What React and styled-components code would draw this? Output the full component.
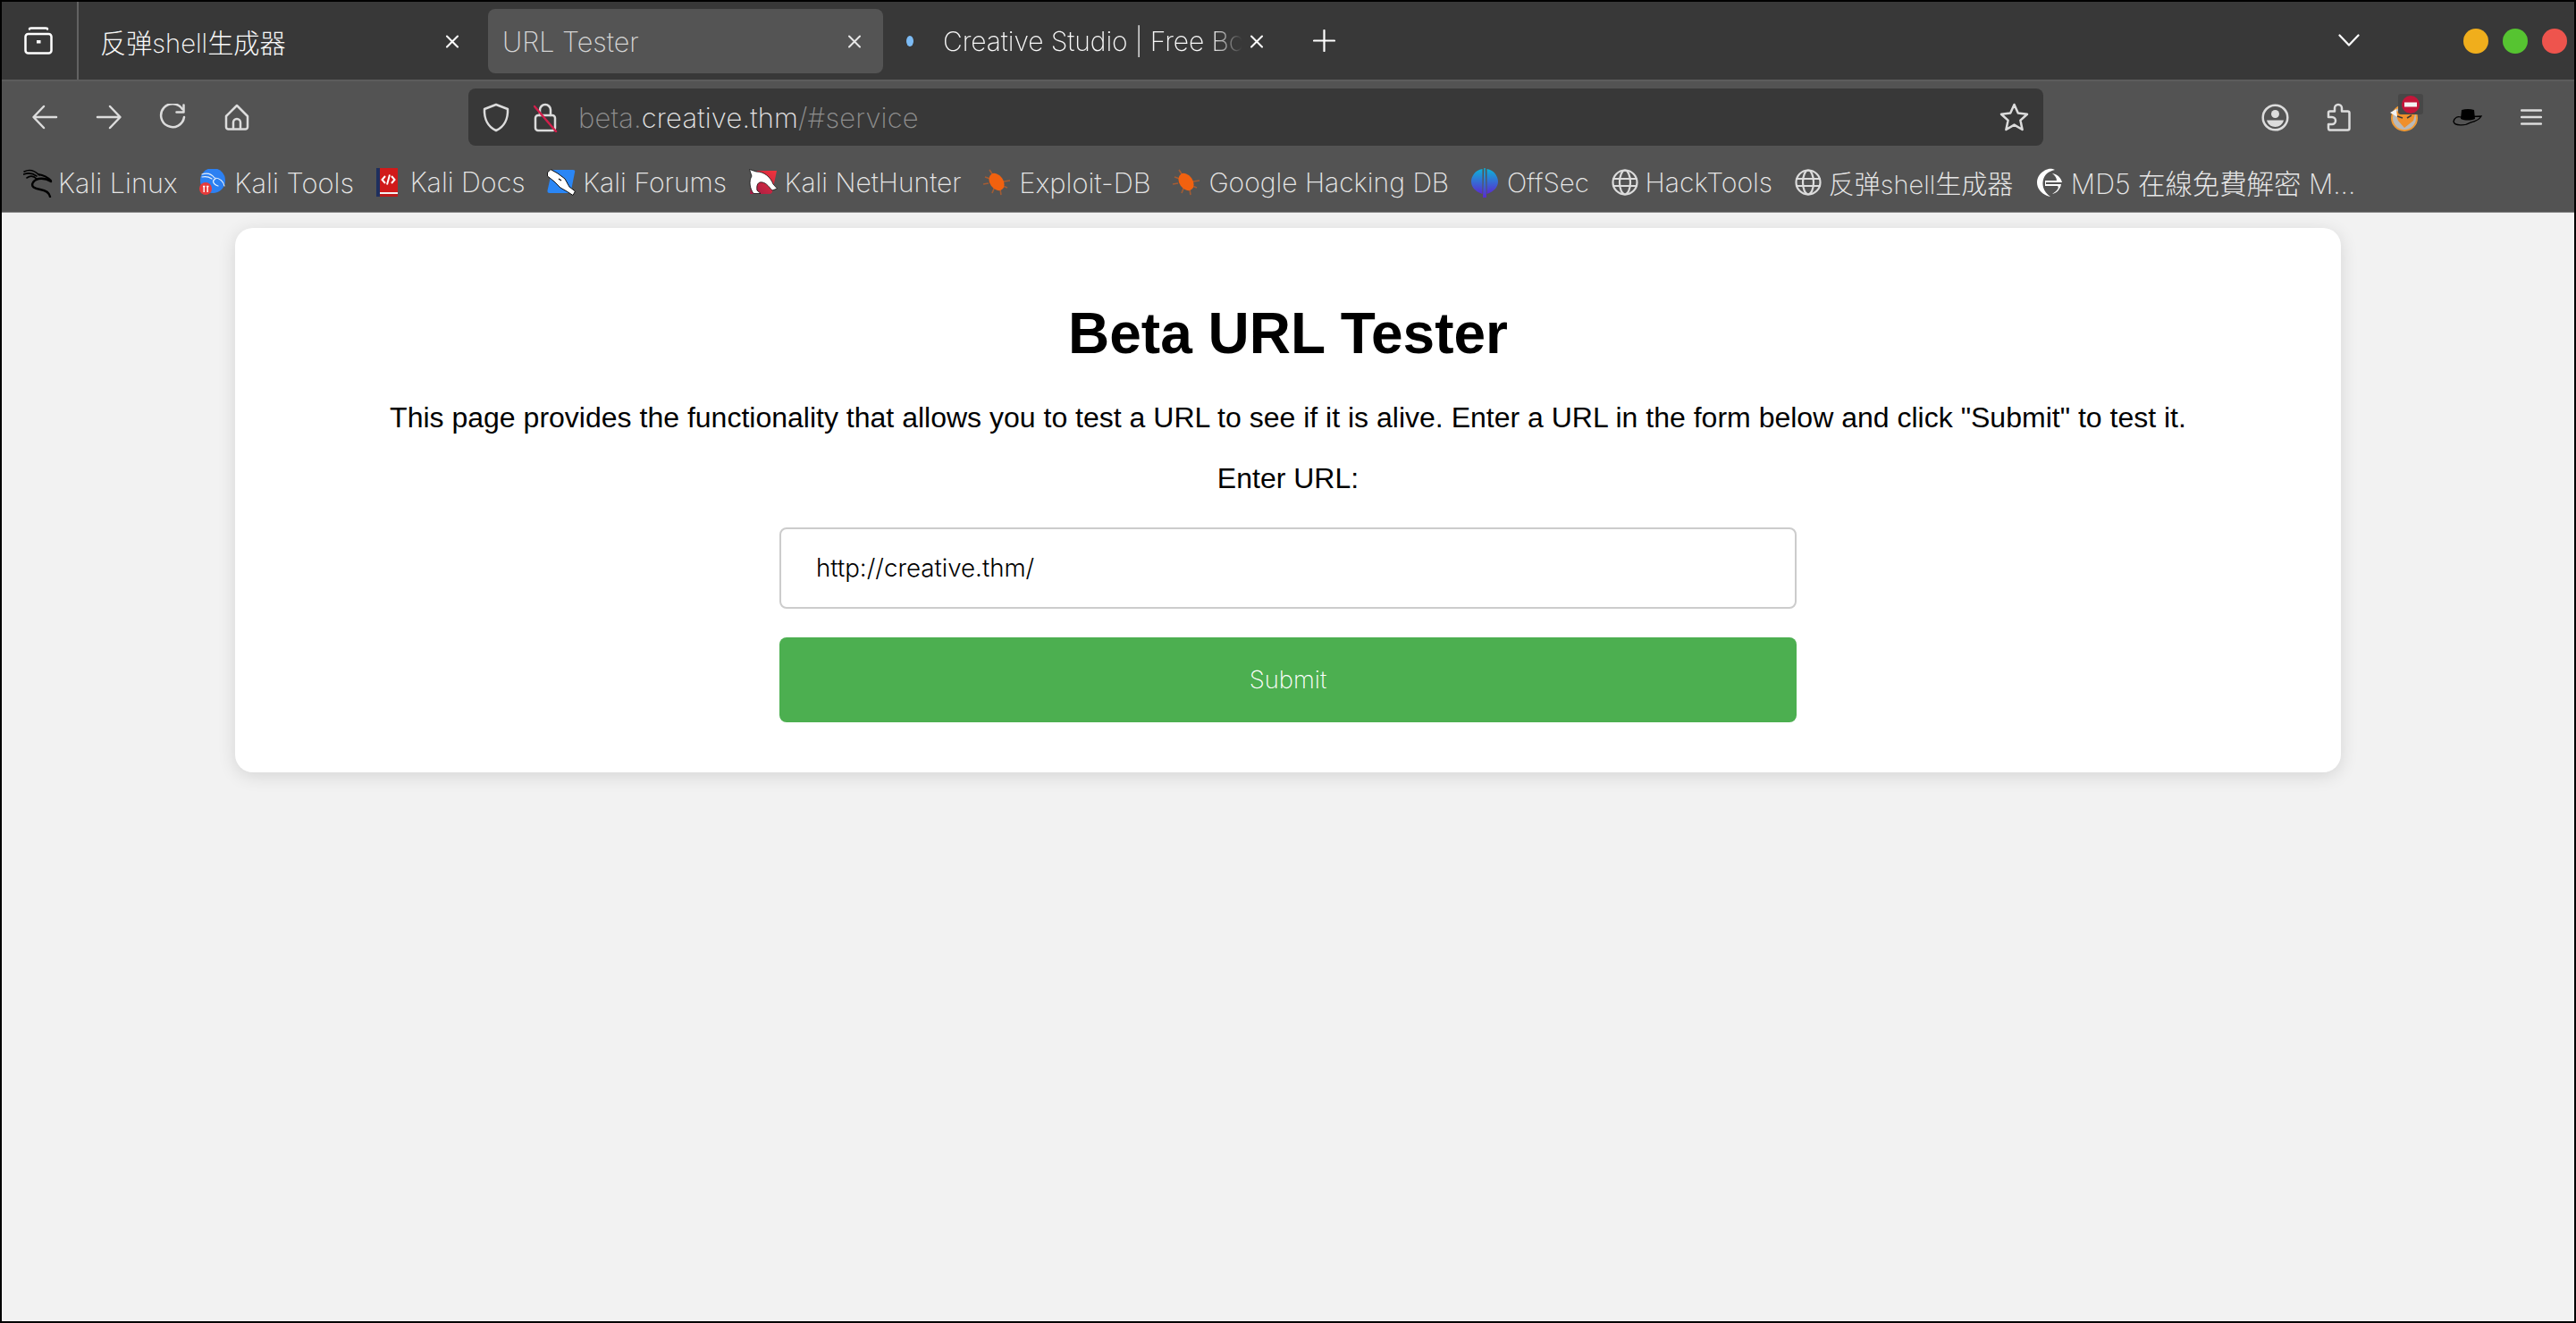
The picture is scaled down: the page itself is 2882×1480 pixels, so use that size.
import React from "react";
import styled, { createGlobalStyle } from "styled-components";

const Global = createGlobalStyle`
  html, body { margin: 0; padding: 0; height: 100%; }
  #root { height: 100%; }
  * { box-sizing: border-box; }
`;

const UI_FONT = `Inter, "Noto Sans CJK SC", "Noto Sans", sans-serif`;
const PAGE_FONT = `"Liberation Sans", Arial, sans-serif`;

const Frame = styled.div`
  height: 100vh;
  border: 2px solid #000;
  display: flex;
  flex-direction: column;
  background: #f2f2f2;
  overflow: hidden;
`;

/* ---------- tab strip ---------- */
const TabStrip = styled.div`
  height: 89px;
  flex: none;
  display: flex;
  align-items: stretch;
  background: #383838;
  border-bottom: 2px solid #5c5c5c;
  font-family: ${UI_FONT};
  font-weight: 200;
`;
const SidebarSlot = styled.div`
  width: 86px;
  flex: none;
  display: flex;
  align-items: center;
  padding-left: 25px;
  border-right: 2px solid #626262;
`;
const TabList = styled.div`
  display: flex;
  gap: 8px;
  padding: 8px 0 6px 8px;
`;
const Tab = styled.div`
  width: 442px;
  height: 72px;
  border-radius: 8px;
  display: flex;
  align-items: center;
  padding: 0 24px 0 16px;
  background: ${(p) => (p.$active ? "#545454" : "transparent")};
  color: ${(p) => (p.$active ? "#d4d4d4" : "#f8f8f8")};
  font-size: 30.5px;
  white-space: nowrap;
`;
const TabDot = styled.span`
  width: 8px;
  height: 12px;
  border-radius: 50%;
  background: #7dbcf5;
  flex: none;
  margin: 0 33px 0 2px;
`;
const TabLabel = styled.span`
  flex: 1;
  font-size: ${(p) => p.$size || 30.5}px;
`;
const FadedTabLabel = styled.span`
  flex: none;
  font-size: 30px;
  width: 345px;
  margin-right: -2px;
  letter-spacing: -0.1px;
  -webkit-mask-image: linear-gradient(90deg, #000 87%, transparent 97%);
  mask-image: linear-gradient(90deg, #000 87%, transparent 97%);
`;
const NewTab = styled.div`
  width: 25px;
  margin-left: 31px;
  display: flex;
  align-items: center;
`;
const StripEnd = styled.div`
  margin-left: auto;
  display: flex;
  align-items: center;
  padding-right: 8px;
`;
const Chevron = styled.div`
  display: flex;
  margin-right: 116px;
  margin-top: -1px;
`;
const WinDots = styled.div`
  display: flex;
  gap: 16px;
`;
const WinDot = styled.span`
  width: 28px;
  height: 28px;
  border-radius: 50%;
  background: ${(p) => p.$c};
`;

/* ---------- toolbar ---------- */
const NavArea = styled.div`
  flex: none;
  height: 147px;
  background: #535353;
  border-bottom: 1px solid #8a8a8a;
  font-family: ${UI_FONT};
  font-weight: 200;
`;
const NavRow = styled.div`
  height: 64px;
  margin-top: 8px;
  display: flex;
  align-items: center;
  padding: 0 12px;
`;
const NavGroup = styled.div`
  display: flex;
  flex: none;
`;
const NavSlot = styled.div`
  width: 71.75px;
  height: 64px;
  display: flex;
  align-items: center;
  justify-content: center;
  position: relative;
`;
const UrlBar = styled.div`
  width: 1762px;
  height: 64px;
  flex: none;
  margin-left: 223px;
  margin-right: auto;
  background: #383838;
  border-radius: 8px;
  display: flex;
  align-items: center;
  padding: 0 16px;
  font-size: 30.9px;
  letter-spacing: 0.2px;
`;
const UrlIcon = styled.span`
  display: flex;
  flex: none;
  margin-right: ${(p) => p.$mr}px;
`;
const UrlText = styled.span`
  color: #8e8e8e;
  flex: 1;
  white-space: nowrap;
`;
const UrlHost = styled.span`
  color: #e6e6e6;
`;

/* ---------- bookmarks ---------- */
const Bookmarks = styled.div`
  height: 74px;
  display: flex;
  align-items: center;
  gap: 24.7px;
  padding: 8px 0 0 24px;
`;
const Bookmark = styled.div`
  display: flex;
  align-items: center;
  color: #e6e6e6;
  font-size: ${(p) => p.$size}px;
  white-space: nowrap;
`;
const BookmarkIcon = styled.span`
  display: flex;
  flex: none;
  width: ${(p) => p.$w}px;
`;
const BookmarkCJK = styled.span`
  font-family: Inter, "Noto Sans CJK TC", sans-serif;
`;

/* ---------- page ---------- */
const Page = styled.main`
  flex: 1;
  padding-top: 17px;
  font-family: ${PAGE_FONT};
  color: #000;
`;
const Card = styled.section`
  width: 2356px;
  height: 609px;
  margin: 0 auto;
  background: #fff;
  border-radius: 20px;
  box-shadow: 0 4px 20px rgba(0, 0, 0, 0.12);
  padding: 40px;
  text-align: center;
`;
const Title = styled.h1`
  font-size: 64px;
  font-weight: 700;
  margin: 41px 0 39px;
  line-height: 74px;
`;
const Lead = styled.p`
  font-size: 32.03px;
  margin: 0 0 31px;
  line-height: 37px;
`;
const Form = styled.form`
  display: flex;
  flex-direction: column;
  align-items: center;
`;
const FieldLabel = styled.label`
  font-size: 32px;
  line-height: 37px;
  margin-bottom: 36px;
`;
const UrlInput = styled.input`
  width: 1138px;
  height: 91px;
  padding: 0 39px 2px;
  border: 2px solid #ccc;
  border-radius: 8px;
  background: #fff;
  font-family: ${UI_FONT};
  font-weight: 300;
  font-size: 27.7px;
  color: #000;
  outline: none;
`;
const Submit = styled.button`
  width: 1138px;
  height: 95px;
  margin-top: 32px;
  padding-bottom: 3px;
  border: none;
  border-radius: 8px;
  background: #4caf50;
  color: #fff;
  font-family: ${UI_FONT};
  font-weight: 200;
  font-size: 27.4px;
`;

/* ---------- drawings ---------- */
const C = "#dcdcdc";
const Line = (p) => (
  <svg {...p} fill="none" stroke={p.stroke || C} strokeWidth={p.strokeWidth || 2.5} strokeLinecap="round" strokeLinejoin="round" />
);
const SidebarIcon = () => (
  <Line width="32" height="31" viewBox="0 0 32 31" stroke="#fff">
    <path d="M6 2.5 Q6 1.5 8 1.5 H24 Q26 1.5 26 2.5" />
    <rect x="1.5" y="8" width="29" height="21.5" rx="3" />
    <rect x="14" y="15" width="4.5" height="3.5" fill="#fff" strokeWidth="0" />
  </Line>
);
const CloseIcon = ({ c }) => (
  <Line width="16" height="15" viewBox="0 0 16 15" stroke={c} strokeWidth="2">
    <path d="M2 1.5 L14 13.5 M14 1.5 L2 13.5" />
  </Line>
);
const Back = () => (
  <Line width="30" height="30" viewBox="0 0 30 30">
    <path d="M28 15 H3 M14 3 L2.5 15 L14 27" />
  </Line>
);
const Forward = () => (
  <Line width="30" height="30" viewBox="0 0 30 30">
    <path d="M2 15 H27 M16 3 L27.5 15 L16 27" />
  </Line>
);
const Reload = () => (
  <Line width="30" height="30" viewBox="0 0 30 30">
    <path d="M26 6 A13 13 0 1 0 28 15" />
    <path d="M27.5 1.5 V9.5 H19.5" />
  </Line>
);
const Home = () => (
  <Line width="30" height="30" viewBox="0 0 30 30">
    <path d="M15 2 L3 14 V26 a2.5 2.5 0 0 0 2.5 2.5 H24.5 a2.5 2.5 0 0 0 2.5 -2.5 V14 Z" />
    <path d="M11 28 V21 a4 4 0 0 1 8 0 V28" />
  </Line>
);
const Shield = () => (
  <Line width="30" height="33" viewBox="0 0 30 33">
    <path d="M15 2 L28 7 C28.5 18 24 27 15 31 C6 27 1.5 18 2 7 Z" />
  </Line>
);
const LockOff = () => (
  <svg width="27" height="33" viewBox="0 0 27 33" fill="none" strokeLinecap="round">
    <rect x="2" y="14" width="22" height="17" rx="3" stroke={C} strokeWidth="2.5" />
    <path d="M7 14 V8 a6 6 0 0 1 12 0 V14" stroke={C} strokeWidth="2.5" />
    <path d="M1 4 L25 32" stroke="#d21f4b" strokeWidth="2.5" />
  </svg>
);
const Star = () => (
  <Line width="33" height="32" viewBox="0 0 33 32">
    <path d="M16.5 2 L20.8 11.6 L31 12.7 L23.4 19.6 L25.6 30 L16.5 24.6 L7.4 30 L9.6 19.6 L2 12.7 L12.2 11.6 Z" />
  </Line>
);
const Account = () => (
  <svg width="31" height="31" viewBox="0 0 31 31" fill="none">
    <circle cx="15.5" cy="15.5" r="13.8" stroke={C} strokeWidth="2.5" />
    <circle cx="15.5" cy="11.5" r="4.5" fill={C} />
    <path d="M6 18.5 H25 C24 23 20 26 15.5 26 C11 26 7 23 6 18.5 Z" fill={C} />
  </svg>
);
const Puzzle = () => (
  <Line width="27" height="32" viewBox="0 0 27 32">
    <path d="M3.5 30.5 a2 2 0 0 1 -1.5 -2 V24 H6 a4 4 0 0 0 0 -8 H2 V11 a1.5 1.5 0 0 1 1.5 -1.5 H9 V6 a4 4 0 0 1 8 0 V9.5 H23.5 a2 2 0 0 1 2 2 V28.5 a2 2 0 0 1 -2 2 Z" />
  </Line>
);
const Fox = () => (
  <svg width="34" height="32" viewBox="0 0 34 32" fill="none">
    <circle cx="18" cy="17" r="14" fill="#b9b9b9" stroke="#f09a35" strokeWidth="2" />
    <path d="M7 8 L18 13 L31 9 L28 20 L18 28 L11 20 Z" fill="#f08f2b" />
    <path d="M2 11 L9 7 L10 16 Z" fill="#f2f2f2" />
    <path d="M10 15 L16 17 M21 17 L26 14" stroke="#3b3b3b" strokeWidth="1.5" />
  </svg>
);
const BlockBadgeBox = styled.span`
  position: absolute;
  left: 30px;
  top: 6px;
  width: 28px;
  height: 23px;
  background: #474747;
  border-radius: 3px;
  display: flex;
  align-items: center;
  justify-content: center;
`;
const BlockBadge = () => (
  <BlockBadgeBox>
    <svg width="20" height="20" viewBox="0 0 20 20">
      <circle cx="10" cy="10" r="10" fill="#c3163a" />
      <rect x="3" y="7.5" width="14" height="5" fill="#f4f4f4" />
    </svg>
  </BlockBadgeBox>
);
const Hat = () => (
  <svg width="33" height="20" viewBox="0 0 33 20" fill="none">
    <path d="M1 15 C2 10 6 9 9 10 L32 9 C29 14 24 15 20 16 C14 20 2 20 1 15 Z" stroke="#000" strokeWidth="1.3" />
    <path d="M10 2 Q17 0 24 2 L25 12 C20 14 14 14 9 12 Z" fill="#000" />
  </svg>
);
const Burger = () => (
  <Line width="24" height="18" viewBox="0 0 24 18" strokeWidth="2.5">
    <path d="M1 1.5 H23 M1 9 H23 M1 16.5 H23" />
  </Line>
);
const KaliLinux = () => (
  <svg width="33" height="33" viewBox="0 0 33 33" fill="none" stroke="#000" strokeLinecap="round">
    <path d="M1 4 C7 1 13 3 18 8" strokeWidth="1.6" />
    <path d="M0.5 7 C6 5 11 6 15 9" strokeWidth="1.6" />
    <path d="M4 11 C8 8 12 9 15 12" strokeWidth="1.6" />
    <path d="M17 7 C23 8 28 11 31 14" strokeWidth="2" />
    <path d="M31 15 C25 11 15 10 11 16 C8 21 13 23 19 24 C25 25 29 27 30 32" strokeWidth="2.4" />
  </svg>
);
const KaliTools = () => (
  <svg width="30" height="30" viewBox="0 0 30 30" fill="none">
    <circle cx="15" cy="13" r="14" fill="#2c80f2" />
    <path d="M3 6 C9 4 14 6 17 10 C23 10 27 14 28 19 M3 9 C8 8 11 9 14 11 M18 11 C14 13 15 17 21 19" stroke="#e8f1fb" strokeWidth="1.2" strokeLinecap="round" />
    <circle cx="7" cy="22" r="7" fill="#e73b3b" />
    <path d="M4 19.5 H6.5 M5.2 19.5 V26 M8 19.5 H10.5 M9.2 19.5 V26" stroke="#fff" strokeWidth="1.4" />
  </svg>
);
const KaliDocs = () => (
  <svg width="24" height="32" viewBox="0 0 24 32" fill="none">
    <rect x="0" y="0" width="24" height="30" fill="#d11a1a" />
    <rect x="0" y="0" width="4" height="32" fill="#1e2f5e" />
    <rect x="4" y="27" width="20" height="2" fill="#f2f2f2" />
    <rect x="4" y="29" width="20" height="3" fill="#b81a1a" />
    <path d="M10 9 L6.5 13 L10 17 M17 9 L20.5 13 L17 17 M15 7.5 L12 18.5" stroke="#fff" strokeWidth="2" />
  </svg>
);
const KaliForums = () => (
  <svg width="32" height="30" viewBox="0 0 32 30" fill="none">
    <path d="M8 1 H29 Q32 1 31 4 L27 24 Q26 27 23 27 H3 Q0 27 0.5 24 L5 4 Q5.5 1 8 1 Z" fill="#2a86f5" />
    <path d="M0.5 4 L4 0.5 L12 5 L20 11 L25 20 L31.5 25 L29 29.5 L22 25 L15 21 L8 14 L0.5 8 Z" fill="#fff" stroke="#111" strokeWidth="1" strokeLinejoin="round" />
    <path d="M13 11 L16 13" stroke="#111" strokeWidth="1.4" />
  </svg>
);
const KaliNet = () => (
  <svg width="32" height="30" viewBox="0 0 32 30" fill="none">
    <defs>
      <linearGradient id="nhg" x1="1" y1="0" x2="0" y2="1">
        <stop offset="0" stopColor="#f4343c" />
        <stop offset="1" stopColor="#a11a45" />
      </linearGradient>
    </defs>
    <path d="M9 2 H31 L26 26 Q25 28 23 28 H1 L2 20 Z" fill="url(#nhg)" />
    <path d="M0.5 0.5 L8 3 C17 3 24 9 27 17 L31.5 22 L26 24 C22 20 20 16 15 15 C10 14 8 18 9 24 L13 27.5 L5 27.5 C1 22 -0.5 14 3 8 Z" fill="#fff" stroke="#111" strokeWidth="0.8" strokeLinejoin="round" />
  </svg>
);
const Bug = () => (
  <svg width="31" height="30" viewBox="0 0 31 30" fill="none">
    <g opacity="0.55" stroke="#e8641a" strokeWidth="1.6">
      <path d="M7 1 L11 7 M2 9 L8 11 M0 17 L6 16 M10 27 L12 22 M20 29 L19 23 M30 13 L23 14 M27 21 L22 19" />
    </g>
    <ellipse cx="15" cy="14.5" rx="7.5" ry="10.5" transform="rotate(-35 15 14.5)" fill="#f2610f" />
  </svg>
);
const OffSec = () => (
  <svg width="30" height="33" viewBox="0 0 30 33" fill="none">
    <defs>
      <linearGradient id="osg" x1="0" y1="0" x2="0" y2="1">
        <stop offset="0" stopColor="#0fb1d8" />
        <stop offset="1" stopColor="#5a2bd0" />
      </linearGradient>
    </defs>
    <path d="M12.5 1 C4 2 0 10 0 15 C0 21 4 26 12.5 29 Z M17.5 1 C26 2 30 10 30 15 C30 21 26 26 17.5 29 Z" fill="url(#osg)" />
    <path d="M14.3 0 H15.7 L17 33 H13 Z" fill="url(#osg)" />
  </svg>
);
const Globe = () => (
  <Line width="30" height="30" viewBox="0 0 30 30" strokeWidth="2.2" stroke="#dcdcdc">
    <circle cx="15" cy="15" r="13.5" />
    <ellipse cx="15" cy="15" rx="6" ry="13.5" />
    <path d="M2 11 H28 M2 19 H28" />
  </Line>
);
const Md5Icon = () => (
  <svg width="32" height="33" viewBox="0 0 32 33" fill="none">
    <path d="M15 1 C7 3 2 9 2 16 C2 24 8 30 17 32 C11 28 8 22 8.5 16 C9 9 13 4 22 2 C20 1 17 0.5 15 1 Z" fill="#fff" />
    <path d="M19 6 C25 7 29 11 30 16 H12 V18 H29 C28 24 24 28 19 29 C25 25 27 22 25 20 H11 V14 H24 C24 11 22 8 19 6 Z" fill="#fff" />
  </svg>
);

const marks = [
  { icon: <KaliLinux />, w: 39, label: "Kali Linux", size: 30.6 },
  { icon: <KaliTools />, w: 39, label: "Kali Tools", size: 30.8 },
  { icon: <KaliDocs />, w: 38, label: "Kali Docs", size: 30.4 },
  { icon: <KaliForums />, w: 40, label: "Kali Forums", size: 30.2 },
  { icon: <KaliNet />, w: 40, label: "Kali NetHunter", size: 30 },
  { icon: <Bug />, w: 40, label: "Exploit-DB", size: 30.8 },
  { icon: <Bug />, w: 40, label: "Google Hacking DB", size: 30 },
  { icon: <OffSec />, w: 40, label: "OffSec", size: 29.5 },
  { icon: <Globe />, w: 38, label: "HackTools", size: 30.2 },
  { icon: <Globe />, w: 38, label: "反弹shell生成器", size: 29 },
];

export default function App() {
  return (
    <>
      <Global />
      <Frame>
        <TabStrip>
          <SidebarSlot>
            <SidebarIcon />
          </SidebarSlot>
          <TabList>
            <Tab>
              <TabLabel $size={29.2}>反弹shell生成器</TabLabel>
              <CloseIcon c="#fff" />
            </Tab>
            <Tab $active>
              <TabLabel>URL Tester</TabLabel>
              <CloseIcon c="#e8e8e8" />
            </Tab>
            <Tab>
              <TabDot />
              <FadedTabLabel>Creative Studio | Free Bo</FadedTabLabel>
              <CloseIcon c="#fff" />
            </Tab>
          </TabList>
          <NewTab>
            <Line width="25" height="25" viewBox="0 0 25 25" stroke="#fff" strokeWidth="2.2">
              <path d="M12.5 1 V24 M1 12.5 H24" />
            </Line>
          </NewTab>
          <StripEnd>
            <Chevron>
              <Line width="24" height="14" viewBox="0 0 24 14" stroke="#fff" strokeWidth="2.2">
                <path d="M1.5 1.5 L12 12.5 L22.5 1.5" />
              </Line>
            </Chevron>
            <WinDots>
              <WinDot $c="#f0ae1c" />
              <WinDot $c="#56c431" />
              <WinDot $c="#ee544d" />
            </WinDots>
          </StripEnd>
        </TabStrip>
        <NavArea>
          <NavRow>
            <NavGroup>
              <NavSlot><Back /></NavSlot>
              <NavSlot><Forward /></NavSlot>
              <NavSlot><Reload /></NavSlot>
              <NavSlot><Home /></NavSlot>
            </NavGroup>
            <UrlBar>
              <UrlIcon $mr={27}><Shield /></UrlIcon>
              <UrlIcon $mr={23}><LockOff /></UrlIcon>
              <UrlText>
                beta.<UrlHost>creative.thm</UrlHost>/#service
              </UrlText>
              <UrlIcon $mr={0}><Star /></UrlIcon>
            </UrlBar>
            <NavGroup>
              <NavSlot><Account /></NavSlot>
              <NavSlot><Puzzle /></NavSlot>
              <NavSlot><Fox /><BlockBadge /></NavSlot>
              <NavSlot><Hat /></NavSlot>
              <NavSlot><Burger /></NavSlot>
            </NavGroup>
          </NavRow>
          <Bookmarks>
            {marks.map(({ icon, w, label, size }) => (
              <Bookmark key={label} $size={size}>
                <BookmarkIcon $w={w}>{icon}</BookmarkIcon>
                {label}
              </Bookmark>
            ))}
            <Bookmark $size={30.4}>
              <BookmarkIcon $w={40}><Md5Icon /></BookmarkIcon>
              <BookmarkCJK>MD5 在線免費解密 M...</BookmarkCJK>
            </Bookmark>
          </Bookmarks>
        </NavArea>
        <Page>
          <Card>
            <Title>Beta URL Tester</Title>
            <Lead>
              This page provides the functionality that allows you to test a URL to see if it is alive. Enter a URL in the form below and click "Submit" to test it.
            </Lead>
            <Form>
              <FieldLabel htmlFor="url">Enter URL:</FieldLabel>
              <UrlInput id="url" defaultValue="http://creative.thm/" />
              <Submit type="button">Submit</Submit>
            </Form>
          </Card>
        </Page>
      </Frame>
    </>
  );
}
